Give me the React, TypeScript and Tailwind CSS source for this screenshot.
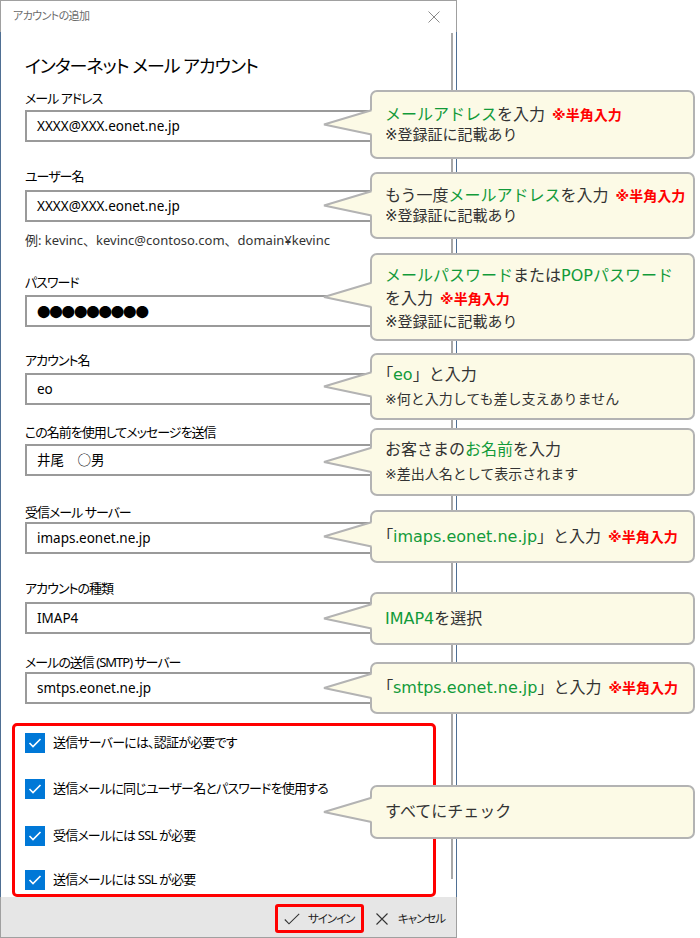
import React from "react";

const G = ({ children }: { children: React.ReactNode }) => (
  <span className="text-[#129a3a]">{children}</span>
);

const R = ({ children }: { children: React.ReactNode }) => (
  <span className="ml-[7px] text-[14px] font-bold text-[#ff0000]">{children}</span>
);

// the opening bracket is narrow in the picture
const B = ({ children }: { children: React.ReactNode }) => (
  <span className="[font-feature-settings:'palt']">{children}</span>
);

const Field = ({
  label,
  value,
  mt,
  gap,
  valueClass = "",
}: {
  label: string;
  value: string;
  mt: string;
  gap: string;
  valueClass?: string;
}) => (
  <div className={mt}>
    <div className="text-[13px] leading-[20px] tracking-[-1px] text-black">{label}</div>
    <div
      className={`${gap} flex h-[32px] items-center border-2 border-[#9a9a9a] bg-white pl-[10px] text-[13.5px] text-black ${valueClass}`}
    >
      {value}
    </div>
  </div>
);

const Check = ({ label, mt }: { label: string; mt: string }) => (
  <div className={`${mt} flex h-[20px] items-center gap-[8px]`}>
    <div className="flex h-[20px] w-[20px] items-center justify-center bg-[#0078d7]">
      <svg width="14" height="12" viewBox="0 0 14 12">
        <polyline points="1.5,6 5,9.5 12.5,2" fill="none" stroke="white" strokeWidth="1.6" />
      </svg>
    </div>
    <span className="text-[13px] tracking-[-0.8px] text-black">{label}</span>
  </div>
);

const Callout = ({
  pos,
  h,
  box,
  children,
}: {
  pos: string;
  h: number;
  box: string;
  children: React.ReactNode;
}) => {
  const c = h / 2;
  return (
    <div className={`absolute left-[370px] w-[325px] ${pos}`}>
      <div
        className={`flex flex-col justify-center rounded-[7px] border-2 border-[#b3b3b3] bg-[#fcfae6] pl-[13px] text-[16px] text-[#333] ${box}`}
      >
        {children}
      </div>
      <svg className="absolute left-[-47px] top-0" width="52" height={h}>
        <polygon points={`51,${c - 15} 1,${c} 51,${c + 10.6}`} fill="#fcfae6" />
        <polyline
          points={`48.5,${c - 14.2} 1,${c} 48.5,${c + 10}`}
          fill="none"
          stroke="#b3b3b3"
          strokeWidth="2"
        />
      </svg>
    </div>
  );
};

export default function App() {
  return (
    <div className="relative h-[938px] w-[700px] overflow-hidden bg-white font-['Noto_Sans','Noto_Sans_CJK_JP',sans-serif]">
      {/* dialog */}
      <div className="flex h-[938px] w-[457px] flex-col [font-feature-settings:'palt']">
        <div className="flex h-[32px] shrink-0 items-center justify-between border-x border-t border-[#a0a0a0] pl-[12px] pr-[16px]">
          <span className="text-[11px] tracking-[-0.6px] text-[#6b6b6b]">アカウントの追加</span>
          <svg width="12" height="12" viewBox="0 0 12 12">
            <path d="M0.5 0.5 L11.5 11.5 M11.5 0.5 L0.5 11.5" stroke="#8a8a8a" strokeWidth="1" />
          </svg>
        </div>

        <div className="relative flex h-[865px] shrink-0 flex-col border-x border-x-[#4f6f93] px-[24px]">
          {/* scrollbar */}
          <div className="absolute right-[3px] top-[1px] h-[846px] w-[2px] bg-[#a8a8a8]" />

          <h1 className="mt-[20px] text-[18px] leading-[28px] tracking-[-1px] text-black">
            インターネット メール アカウント
          </h1>
          <Field label="メール アドレス" value="XXXX@XXX.eonet.ne.jp" mt="mt-[8px]" gap="mt-[2px]" />
          <Field label="ユーザー名" value="XXXX@XXX.eonet.ne.jp" mt="mt-[24px]" gap="mt-[4px]" />
          <div className="mt-[8px] text-[13px] leading-[20px] text-[#333] [font-feature-settings:normal]">
            例: kevinc、kevinc@contoso.com、domain¥kevinc
          </div>
          <Field
            label="パスワード"
            value="●●●●●●●●●"
            mt="mt-[22px]"
            gap="mt-[3px]"
            valueClass="font-['Noto_Sans_CJK_JP'] text-[12.5px] tracking-[-1.2px] [font-feature-settings:normal]"
          />
          <Field label="アカウント名" value="eo" mt="mt-[23px]" gap="mt-[3px]" />
          <Field
            label="この名前を使用してメッセージを送信"
            value="井尾　○男"
            mt="mt-[17px]"
            gap="mt-[2px]"
            valueClass="[font-feature-settings:normal]"
          />
          <Field label="受信メール サーバー" value="imaps.eonet.ne.jp" mt="mt-[26px]" gap="mt-0" />
          <Field label="アカウントの種類" value="IMAP4" mt="mt-[24px]" gap="mt-[4px]" />
          <Field label="メールの送信 (SMTP) サーバー" value="smtps.eonet.ne.jp" mt="mt-[18px]" gap="mt-0" />

          <div className="relative z-10 ml-[-13px] mr-[-4px] mt-[19px] flex h-[177px] flex-col rounded-[5px] border-[3px] border-[#ff0000] pl-[10px] pt-[7px]">
            <Check label="送信サーバーには、認証が必要です" mt="mt-0" />
            <Check label="送信メールに同じユーザー名とパスワードを使用する" mt="mt-[26px]" />
            <Check label="受信メールには SSL が必要" mt="mt-[27px]" />
            <Check label="送信メールには SSL が必要" mt="mt-[24px]" />
          </div>
        </div>

        <div className="flex flex-1 items-start justify-end border-x border-b border-[#a0a0a0] bg-[#e6e6e6] pr-[11px] pt-[7px]">
          <div className="flex h-[29px] w-[89px] items-center gap-[8px] rounded-[3px] border-[3px] border-[#ff0000] pl-[6px]">
            <svg width="16" height="12" viewBox="0 0 16 12">
              <polyline points="0.8,6.5 5,10.8 15.2,0.8" fill="none" stroke="#333" strokeWidth="1.1" />
            </svg>
            <span className="text-[11.5px] tracking-[-1px] text-[#222]">サインイン</span>
          </div>
          <div className="ml-[12px] flex h-[29px] items-center gap-[10px]">
            <svg width="12" height="12" viewBox="0 0 12 12">
              <path d="M0.5 0.5 L11.5 11.5 M11.5 0.5 L0.5 11.5" stroke="#333" strokeWidth="1.1" />
            </svg>
            <span className="text-[11.5px] tracking-[-1px] text-[#222]">キャンセル</span>
          </div>
        </div>
      </div>

      {/* callouts */}
      <div className="absolute inset-0 z-20 font-['DejaVu_Sans','Noto_Sans_CJK_JP',sans-serif]">
        <Callout pos="top-[90px]" h={69} box="h-[69px]">
          <div className="leading-[20px]">
            <G>メールアドレス</G>を入力<R>※半角入力</R>
          </div>
          <div className="text-[15px] leading-[20px]">※登録証に記載あり</div>
        </Callout>

        <Callout pos="top-[172px]" h={67} box="h-[67px]">
          <div className="leading-[20px]">
            もう一度<G>メールアドレス</G>を入力<R>※半角入力</R>
          </div>
          <div className="text-[15px] leading-[20px]">※登録証に記載あり</div>
        </Callout>

        <Callout pos="top-[253px]" h={88} box="h-[88px] pt-[4px]">
          <div className="leading-[23px]">
            <G>メールパスワード</G>または<G>POPパスワード</G>
          </div>
          <div className="leading-[23px]">
            を入力<R>※半角入力</R>
          </div>
          <div className="text-[15px] leading-[23px]">※登録証に記載あり</div>
        </Callout>

        <Callout pos="top-[353px]" h={67} box="h-[67px]">
          <div className="leading-[25px]">
            <B>「</B>
            <G>eo</G>」と入力
          </div>
          <div className="text-[14px] leading-[25px]">※何と入力しても差し支えありません</div>
        </Callout>

        <Callout pos="top-[428px]" h={68} box="h-[68px]">
          <div className="leading-[25px]">
            お客さまの<G>お名前</G>を入力
          </div>
          <div className="text-[14px] leading-[25px]">※差出人名として表示されます</div>
        </Callout>

        <Callout pos="top-[510px]" h={53} box="h-[53px]">
          <div className="leading-[22px]">
            <B>「</B>
            <G>imaps.eonet.ne.jp</G>」と入力<R>※半角入力</R>
          </div>
        </Callout>

        <Callout pos="top-[592px]" h={53} box="h-[53px]">
          <div className="leading-[22px]">
            <G>IMAP4</G>を選択
          </div>
        </Callout>

        <Callout pos="top-[662px]" h={52} box="h-[52px]">
          <div className="leading-[22px]">
            <B>「</B>
            <G>smtps.eonet.ne.jp</G>」と入力<R>※半角入力</R>
          </div>
        </Callout>

        <Callout pos="top-[785px]" h={54} box="h-[54px]">
          <div className="leading-[22px]">すべてにチェック</div>
        </Callout>
      </div>
    </div>
  );
}
